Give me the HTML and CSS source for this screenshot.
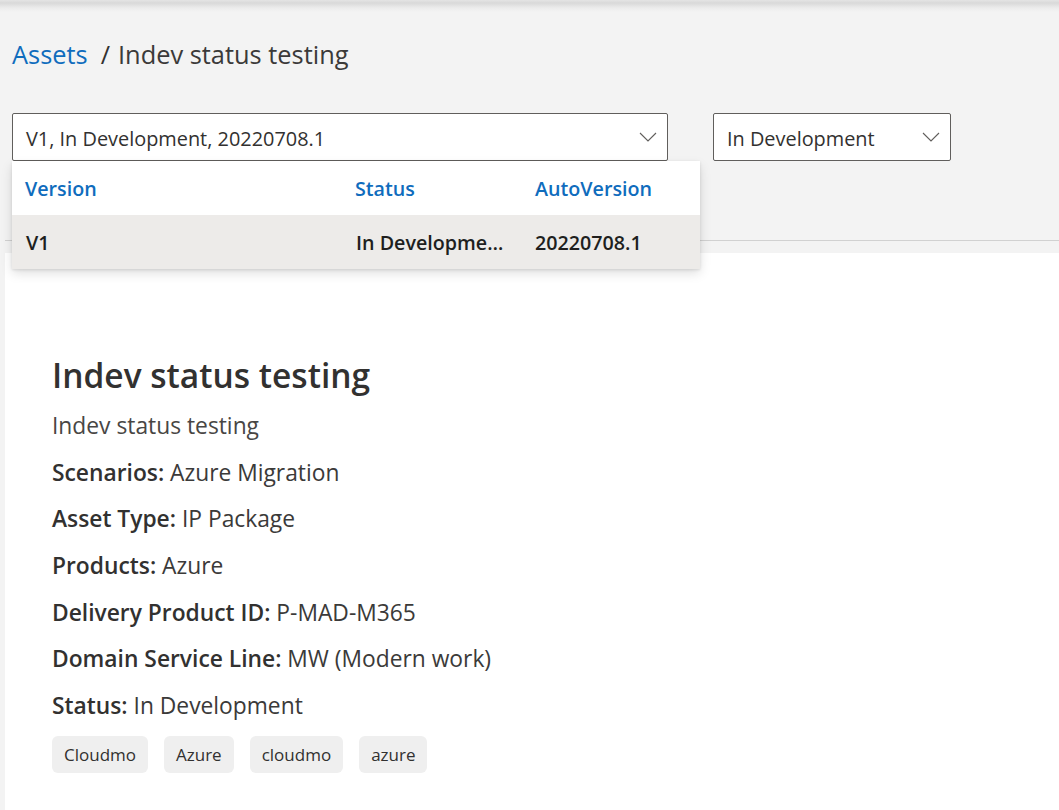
FILE: index.html
```html
<!DOCTYPE html>
<html lang="en">
<head>
<meta charset="utf-8">
<title>Indev status testing</title>
<link rel="stylesheet" href="styles.css">
</head>
<body>
<div class="topshade"></div>
<div class="page">
  <header class="head">
    <nav class="crumbs">
      <a class="crumb-link" href="#">Assets</a>
      <span class="crumb-sep">/</span>
      <span class="crumb-current">Indev status testing</span>
    </nav>
    <div class="filters">
      <div class="dd-wrap">
        <div class="dropdown dropdown-version">
          <span class="dd-text">V1, In Development, 20220708.1</span>
          <svg class="chev" width="18" height="10" viewBox="0 0 18 10"><polyline points="1,1 9,9 17,1" fill="none" stroke="#605e5c" stroke-width="1.1"/></svg>
        </div>
        <div class="callout">
          <div class="cl-row cl-head">
            <span>Version</span><span>Status</span><span>AutoVersion</span>
          </div>
          <div class="cl-row cl-item">
            <span>V1</span><span class="ell" title="In Development">In Development</span><span>20220708.1</span>
          </div>
        </div>
      </div>
      <div class="dropdown dropdown-status">
        <span class="dd-text">In Development</span>
        <svg class="chev" width="18" height="10" viewBox="0 0 18 10"><polyline points="1,1 9,9 17,1" fill="none" stroke="#605e5c" stroke-width="1.1"/></svg>
      </div>
    </div>
  </header>
  <main class="panel">
    <h1 class="title">Indev status testing</h1>
    <div class="details">
      <p class="desc">Indev status testing</p>
      <p><b>Scenarios:</b> Azure Migration</p>
      <p><b>Asset Type:</b> IP Package</p>
      <p><b>Products:</b> Azure</p>
      <p><b>Delivery Product ID:</b> P-MAD-M365</p>
      <p><b>Domain Service Line:</b> MW (Modern work)</p>
      <p><b>Status:</b> In Development</p>
    </div>
    <div class="tags">
      <span class="tag">Cloudmo</span>
      <span class="tag">Azure</span>
      <span class="tag">cloudmo</span>
      <span class="tag">azure</span>
    </div>
  </main>
</div>
</body>
</html>
```
FILE: styles.css
```css
html, body {
  margin: 0;
  padding: 0;
}
body {
  background: #f3f3f3;
  font-family: "Open Sans", "Noto Sans", sans-serif;
  color: #323130;
  height: 100vh;
  overflow: hidden;
  display: flex;
  flex-direction: column;
}
.topshade {
  flex: none;
  height: 12px;
  background: linear-gradient(to bottom, #e4e4e4 0, #d9d9d9 3px, #ececec 8px, #f3f3f3 12px);
}
.page {
  flex: 1;
  margin-left: 5px;
  display: flex;
  flex-direction: column;
  min-height: 0;
}
.head {
  flex: none;
  padding: 24px 0 0 7px;
  border-bottom: 1px solid #d1d1d1;
  height: 229px;
  box-sizing: border-box;
}
.crumbs {
  display: flex;
  align-items: baseline;
  font-size: 25.4px;
  line-height: 36px;
  height: 36px;
}
.crumb-link {
  color: #0f6cbd;
  text-decoration: none;
}
.crumb-sep {
  margin: 0 8px 0 13px;
  color: #323130;
}
.crumb-current {
  color: #3b3a39;
}
.filters {
  display: flex;
  margin-top: 41px;
  gap: 45px;
}
.dd-wrap {
  position: relative;
}
.dropdown {
  box-sizing: border-box;
  height: 48px;
  border: 1px solid #605e5c;
  border-radius: 2px;
  background: #fff;
  display: flex;
  align-items: center;
  justify-content: space-between;
  padding: 2px 10px 0 13px;
  font-size: 19.9px;
}
.dropdown-version {
  width: 656px;
}
.dropdown-status {
  width: 238px;
}
.chev {
  display: block;
  margin-top: -2px;
}
.callout {
  position: absolute;
  left: 0;
  top: 48px;
  width: 688px;
  background: #fff;
  box-shadow: 0 4.8px 10.8px rgba(0,0,0,0.13), 0 1px 2.7px rgba(0,0,0,0.11);
  z-index: 5;
}
.cl-row {
  display: grid;
  grid-template-columns: 330px 180px 1fr;
  height: 54px;
  align-items: center;
  padding-left: 13px;
  font-size: 19.7px;
  font-weight: 600;
}
.cl-head {
  color: #0f6cbd;
}
.cl-item {
  background: #edebe9;
  color: #201f1e;
}
.cl-item span:first-child {
  padding-left: 1px;
}
.ell {
  white-space: nowrap;
  overflow: hidden;
  text-overflow: ellipsis;
  max-width: 149px;
  padding-left: 1px;
}
.panel {
  flex: 1;
  background: #fff;
  margin-top: 12px;
  padding: 98px 0 0 47px;
}
.title {
  margin: 0;
  font-size: 33.5px;
  line-height: 48px;
  font-weight: 600;
  color: #323130;
}
.details {
  display: flex;
  flex-direction: column;
  gap: 16.67px;
  margin-top: 12px;
}
.details p {
  margin: 0;
  font-size: 22.8px;
  line-height: 30px;
  color: #3b3a39;
}
.details b {
  font-weight: 600;
  color: #323130;
}
.details .desc {
  color: #484644;
}
.tags {
  display: flex;
  gap: 16px;
  margin-top: 15px;
}
.tag {
  background: #efefef;
  border-radius: 6px;
  padding: 0 12px;
  height: 37px;
  line-height: 37px;
  font-size: 17px;
  color: #323130;
}
```
